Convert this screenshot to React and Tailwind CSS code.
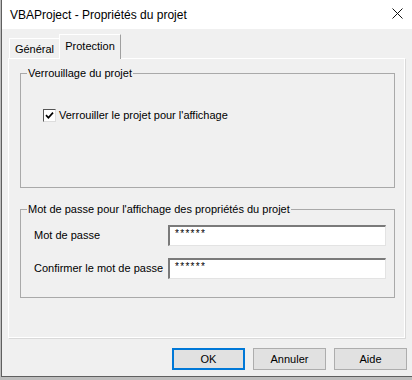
import React from 'react';

const font = { fontFamily: '"Liberation Sans", Arial, sans-serif' };

const Button = ({ label, primary }) => (
  <button
    className={`w-[73px] h-[22px] text-[11px] text-black bg-[#e1e1e1] ${
      primary ? 'border-2 border-[#0078d7]' : 'border border-[#adadad]'
    }`}
  >
    {label}
  </button>
);

const Field = ({ label, mt }) => (
  <div className={`flex items-center ${mt}`}>
    <span className="w-[134px] text-[11px] leading-[13px] text-black">{label}</span>
    <div className="w-[218px] h-[21px] bg-white border-t-2 border-l-2 border-t-[#7a7a7a] border-l-[#7a7a7a] border-b border-r border-b-[#e3e3e3] border-r-[#e3e3e3] pl-[5px] pt-[2px] text-[10px] leading-[10px] tracking-[1.3px] text-black">
      ******
    </div>
  </div>
);

export default function App() {
  return (
    <div className="w-[412px] h-[380px] overflow-hidden bg-[#bdbdbd] pl-[1px]" style={font}>
      <div className="h-[377px] flex flex-col border-l border-b border-[#5f5f5f] bg-[#f0f0f0]">
        {/* title bar */}
        <div className="h-[29px] bg-white flex items-center justify-between pl-[8px] pr-[9px]">
          <span className="text-[12px] text-black">VBAProject - Propriétés du projet</span>
          <svg width="11" height="11" viewBox="0 0 11 11" className="mb-[2px]">
            <path d="M0.5 0.5 L10.5 10.5 M10.5 0.5 L0.5 10.5" stroke="#111" strokeWidth="1" />
          </svg>
        </div>

        {/* tabs */}
        <div className="ml-[6px] mt-[5px] h-[24px] flex items-end relative z-10">
          <div className="w-[50px] h-[21px] mb-[-1px] ml-[1px] flex items-center justify-center border-t border-l border-white text-[11px] text-black">
            Général
          </div>
          <div className="w-[62px] h-[25px] mb-[-1px] flex items-center justify-center border-t border-l border-white border-r border-r-[#a0a0a0] bg-[#f0f0f0] text-[11px] text-black pb-[2px]">
            Protection
          </div>
        </div>

        {/* tab page */}
        <div className="ml-[6px] w-[397px] h-[280px] border border-white shadow-[1px_1px_0_#d9d9d9] flex flex-col">
          <fieldset className="ml-[11px] mt-[8px] w-[375px] h-[121px] border border-[#a9a9a9] pl-[6px]">
            <legend className="px-[1px] text-[11px] leading-[13px] text-black">Verrouillage du projet</legend>
            <div className="flex items-center mt-[29px] ml-[16px]">
              <div className="w-[13px] h-[13px] bg-white border border-t-[#555] border-l-[#555] border-b-[#ddd] border-r-[#ddd] flex items-center justify-center">
                <svg width="9" height="9" viewBox="0 0 9 9">
                  <path d="M1 4.2 L3.4 6.8 L8 1.6" stroke="#000" strokeWidth="1.7" fill="none" />
                </svg>
              </div>
              <span className="ml-[3px] text-[11px] leading-[13px] text-black">
                Verrouiller le projet pour l'affichage
              </span>
            </div>
          </fieldset>

          <fieldset className="ml-[11px] mt-[15px] w-[375px] h-[95px] border border-[#a9a9a9] pl-[6px]">
            <legend className="px-[1px] text-[11px] leading-[13px] text-black">
              Mot de passe pour l'affichage des propriétés du projet
            </legend>
            <div className="pl-[7px]">
              <Field label="Mot de passe" mt="mt-[9px]" />
              <Field label="Confirmer le mot de passe" mt="mt-[12px]" />
            </div>
          </fieldset>
        </div>

        {/* buttons */}
        <div className="mt-[10px] flex justify-end gap-[8px] pr-[5px]">
          <Button label="OK" primary />
          <Button label="Annuler" />
          <Button label="Aide" />
        </div>
      </div>
    </div>
  );
}
